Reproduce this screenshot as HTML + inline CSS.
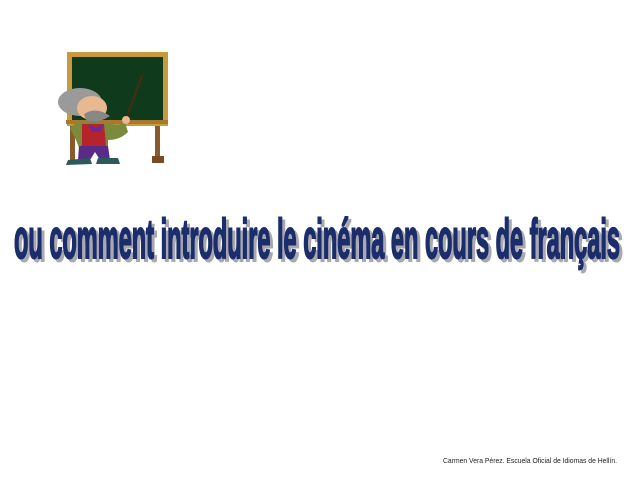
<!DOCTYPE html>
<html><head><meta charset="utf-8"><style>
html,body{margin:0;padding:0;background:#fff;width:638px;height:478px;overflow:hidden;position:relative}
svg{position:absolute;left:0;top:0}
</style></head><body>
<svg width="638" height="478" viewBox="0 0 638 478">
 <rect x="70" y="118" width="5" height="44" fill="#8a5a2a"/>
 <rect x="155" y="118" width="5" height="42" fill="#8a5a2a"/>
 <rect x="152" y="156" width="12" height="7" fill="#7a4a20"/>
 <rect x="67" y="52" width="101" height="74" fill="#c89a3c"/>
 <rect x="72" y="57" width="91" height="63" fill="#0f3b1c"/>
 <rect x="66" y="120" width="102" height="4" fill="#a9782a"/>
 <line x1="143" y1="73" x2="126" y2="119" stroke="#4a2a10" stroke-width="2"/>
 <path d="M70 128 Q80 118 96 122 L112 124 Q120 126 125 122 L128 132 Q120 140 108 140 L108 150 L80 150 L76 140 Z" fill="#7c8a3e"/>
 <path d="M82 124 L104 124 L106 146 L82 148 Z" fill="#b4242a"/>
 <path d="M79 146 L108 146 L110 160 L100 160 L95 152 L90 160 L78 160 Z" fill="#5a2a8a"/>
 <path d="M68 160 L90 158 L92 164 L66 165 Z" fill="#2a5a5a"/>
 <path d="M98 158 L118 158 L120 164 L96 164 Z" fill="#2a5a5a"/>
 <ellipse cx="80" cy="102" rx="22" ry="14" fill="#9a9a9a"/>
 <ellipse cx="92" cy="108" rx="15" ry="12" fill="#e8b890"/>
 <path d="M84 114 Q96 106 110 116 Q98 124 86 120 Z" fill="#888"/>
 <path d="M88 124 L96 128 L104 124 L100 132 L92 132 Z" fill="#6a2a9a"/>
 <circle cx="126" cy="120" r="4" fill="#e8b890"/>
 <g font-family="'Liberation Sans Narrow','Liberation Sans',sans-serif" font-weight="bold" font-size="56">
  <text x="17" y="261" textLength="606" lengthAdjust="spacingAndGlyphs" fill="#a8a8b0" stroke="#a8a8b0" stroke-width="2">ou comment introduire le cinéma en cours de français</text>
  <text x="14" y="258" textLength="606" lengthAdjust="spacingAndGlyphs" fill="#1b2d6b" stroke="#1b2d6b" stroke-width="2">ou comment introduire le cinéma en cours de français</text>
 </g>
 <text x="443" y="463" font-family="'Liberation Sans',sans-serif" font-size="7.5" fill="#222" textLength="174" lengthAdjust="spacingAndGlyphs">Carmen Vera Pérez. Escuela Oficial de Idiomas de Hellín.</text>
</svg>
</body></html>
